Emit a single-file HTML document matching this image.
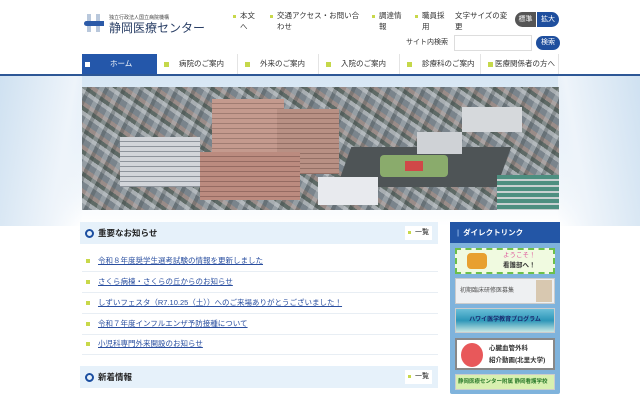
<!DOCTYPE html><html><head><meta charset="utf-8"><style>
*{margin:0;padding:0;box-sizing:border-box}
body{width:640px;height:400px;overflow:hidden;font-family:"Liberation Sans","Noto Sans CJK JP",sans-serif;background:#fff;position:relative;color:#333}
.a{position:absolute}
.t{font-size:7.5px;line-height:11px}
.dot{display:inline-block;width:3px;height:3px;background:#c8d84a;margin-right:4px;vertical-align:middle}
.nav div{position:absolute;top:0;height:20px;font-size:7.5px;line-height:20px;color:#333;border-right:1px solid #e4e4e4}
.sq{display:inline-block;width:5px;height:5px;background:#c5d84a;margin-right:10px;vertical-align:middle}
.li{position:absolute;left:82px;width:356px;height:20px;border-bottom:1px solid #e8eef4;font-size:7.5px;line-height:18px;color:#2a4fa0;text-decoration:underline}
.li i{display:inline-block;width:4px;height:4px;background:#c8d84a;margin:0 8px 0 4px;vertical-align:middle}
.hd{position:absolute;left:80px;width:358px;height:22px;background:#e6f1fa;font-size:8.5px;font-weight:bold;line-height:22px;color:#222;padding-left:18px}
.hd:before{content:"";position:absolute;left:5px;top:7px;width:5px;height:5px;border:2px solid #1b4ea0;border-radius:50%}
.hd span{position:absolute;right:6px;top:4px;height:14px;background:#fff;line-height:14px;font-size:7px;font-weight:normal;padding:0 3px}
.bn{position:absolute;left:455px;width:100px;border:1px solid #ccc;overflow:hidden;white-space:nowrap}
</style></head><body>
<div class="a" style="left:84px;top:14px;width:20px;height:18px">
<div class="a" style="left:3px;top:0;width:4px;height:18px;background:#b9c8dc"></div>
<div class="a" style="left:12px;top:0;width:4px;height:18px;background:#b9c8dc"></div>
<div class="a" style="left:0;top:7px;width:20px;height:5px;background:#2b5aa8;border-radius:5px 0 0 5px"></div>
</div>
<div class="a" style="left:109px;top:14px;font-size:5px;color:#444">独立行政法人国立病院機構</div>
<div class="a" style="left:109px;top:20px;font-size:12px;color:#2a3f66;line-height:16px">静岡医療センター</div>
<div class="a t" style="left:233px;top:10px"><span class="dot"></span>本文<br><span style="margin-left:7px">へ</span></div>
<div class="a t" style="left:270px;top:10px"><span class="dot"></span>交通アクセス・お問い合<br><span style="margin-left:7px">わせ</span></div>
<div class="a t" style="left:372px;top:10px"><span class="dot"></span>調達情<br><span style="margin-left:7px">報</span></div>
<div class="a t" style="left:415px;top:10px"><span class="dot"></span>職員採<br><span style="margin-left:7px">用</span></div>
<div class="a t" style="left:455px;top:10px">文字サイズの変<br>更</div>
<div class="a" style="left:515px;top:12px;width:44px;height:15px;border-radius:8px;overflow:hidden;font-size:7px;color:#fff;line-height:15px">
<div class="a" style="left:0;top:0;width:21px;height:15px;background:#555;text-align:center">標準</div>
<div class="a" style="left:22px;top:0;width:22px;height:15px;background:#1f4f9e;text-align:center">拡大</div></div>
<div class="a" style="left:406px;top:38px;font-size:7px;line-height:10px">サイト内検索</div>
<div class="a" style="left:454px;top:35px;width:78px;height:16px;border:1px solid #ddd;background:#fff"></div>
<div class="a" style="left:536px;top:36px;width:24px;height:14px;border-radius:7px;background:#1f4f9e;color:#fff;font-size:7px;line-height:14px;text-align:center">検索</div>
<div class="a nav" style="left:0;top:54px;width:640px;height:20px">
<div style="left:82px;width:75px;background:#2457aa;color:#fff;border:none"><span class="sq" style="background:#fff;margin-left:3px;margin-right:20px;width:5px;height:5px"></span>ホーム</div>
<div style="left:157px;width:81px;padding-left:7px"><span class="sq"></span>病院のご案内</div>
<div style="left:238px;width:81px;padding-left:7px"><span class="sq"></span>外来のご案内</div>
<div style="left:319px;width:81px;padding-left:7px"><span class="sq"></span>入院のご案内</div>
<div style="left:400px;width:81px;padding-left:7px"><span class="sq"></span>診療科のご案内</div>
<div style="left:481px;width:78px;padding-left:7px"><span class="sq" style="margin-right:2px"></span>医療関係者の方へ</div>
</div>
<div class="a" style="left:0;top:74px;width:640px;height:2px;background:#2d5796"></div>
<div class="a" style="left:0;top:76px;width:640px;height:150px;background:linear-gradient(#d6e6f4,#e6f0f9 40%,#f4f8fc 80%,#fff)"></div>
<div class="a" style="left:0;top:76px;width:82px;height:150px;background:linear-gradient(100deg,#cfe1f1,#eef4fa 70%,rgba(255,255,255,0))"></div>
<div class="a" style="left:558px;top:76px;width:82px;height:150px;background:linear-gradient(260deg,#cfe1f1,#eef4fa 70%,rgba(255,255,255,0))"></div>
<div class="a" style="left:82px;top:87px;width:477px;height:123px;overflow:hidden;background:repeating-linear-gradient(35deg,#7a848c 0 6px,#a8aeb2 6px 10px,#5e6a66 10px 14px,#9a8c88 14px 18px)">
<div class="a" style="left:0;top:0;width:477px;height:123px;background:repeating-linear-gradient(115deg,rgba(200,205,210,.35) 0 5px,rgba(60,70,70,.3) 5px 9px,rgba(0,0,0,0) 9px 16px)"></div>
<div class="a" style="left:38px;top:50px;width:80px;height:50px;background:repeating-linear-gradient(#d2d5da 0 4px,#8e949c 4px 5px)"></div>
<div class="a" style="left:130px;top:12px;width:72px;height:70px;background:repeating-linear-gradient(#c49a8e 0 4px,#a07c72 4px 5px)"></div>
<div class="a" style="left:195px;top:22px;width:62px;height:65px;background:repeating-linear-gradient(#b89084 0 4px,#947066 4px 5px)"></div>
<div class="a" style="left:118px;top:65px;width:100px;height:48px;background:repeating-linear-gradient(#bb8b7f 0 4px,#956b62 4px 5px)"></div>
<div class="a" style="left:262px;top:60px;width:160px;height:40px;background:#4e5456;transform:skewX(-20deg)"></div>
<div class="a" style="left:298px;top:68px;width:68px;height:22px;background:#8aab6c;border-radius:4px"></div>
<div class="a" style="left:323px;top:74px;width:18px;height:10px;background:#d04848"></div>
<div class="a" style="left:236px;top:90px;width:60px;height:28px;background:#e8eaee"></div>
<div class="a" style="left:335px;top:45px;width:45px;height:22px;background:#cfd2d6"></div>
<div class="a" style="left:415px;top:88px;width:62px;height:35px;background:repeating-linear-gradient(#4d8f80 0 4px,#c8d0d0 4px 6px)"></div>
<div class="a" style="left:380px;top:20px;width:60px;height:25px;background:#d6d9dc"></div>
</div>
<div class="hd" style="top:222px">重要なお知らせ<span><i class="dot"></i>一覧</span></div>
<div class="li" style="top:252px"><i></i>令和８年度奨学生選考試験の情報を更新しました</div>
<div class="li" style="top:273px"><i></i>さくら病棟・さくらの丘からのお知らせ</div>
<div class="li" style="top:294px"><i></i>しずいフェスタ（R7.10.25（土））へのご来場ありがとうございました！</div>
<div class="li" style="top:315px"><i></i>令和７年度インフルエンザ予防接種について</div>
<div class="li" style="top:335px"><i></i>小児科専門外来開設のお知らせ</div>
<div class="hd" style="top:366px">新着情報<span><i class="dot"></i>一覧</span></div>
<div class="a" style="left:450px;top:222px;width:110px;height:172px;background:#7fb3dc;border-radius:2px"></div>
<div class="a" style="left:450px;top:222px;width:110px;height:21px;background:#2356a6;color:#fff;font-size:7.5px;font-weight:bold;line-height:21px;padding-left:7px"><span style="color:#8fb4e6;margin-right:4px">|</span>ダイレクトリンク</div>
<div class="bn" style="top:248px;height:26px;background:#f0fae0;border:2px dashed #6cc04a;font-size:6.5px;line-height:10px;padding:1px 0 0 46px"><div class="a" style="left:10px;top:3px;width:20px;height:16px;background:#e8a030;border-radius:4px"></div><span style="color:#e060a0">ようこそ！</span><br><b>看護部へ！</b></div>
<div class="bn" style="top:278px;height:26px;background:#eef0f2;font-size:6px;line-height:24px;padding-left:4px;color:#555">初期臨床研修医募集<div class="a" style="right:2px;top:1px;width:16px;height:22px;background:#d8c8b0"></div></div>
<div class="bn" style="top:308px;height:25px;background:linear-gradient(#6bbfd8,#2d96b8 50%,#c8e8e4);font-size:6px;font-weight:bold;color:#1a2a70;line-height:23px;text-align:center">ハワイ医学教育プログラム</div>
<div class="bn" style="top:338px;height:32px;background:#fff;border:2px solid #888;font-size:6.5px;font-weight:bold;line-height:12px;padding:3px 0 0 32px"><div class="a" style="left:4px;top:3px;width:22px;height:24px;background:#e8585a;border-radius:50%"></div>心臓血管外科<br>紹介動画(北里大学)</div>
<div class="bn" style="top:374px;height:16px;background:#d8f0b0;font-size:5.5px;color:#2a7a2a;font-weight:bold;line-height:14px;padding-left:2px">静岡医療センター附属 静岡看護学校</div>
</body></html>
